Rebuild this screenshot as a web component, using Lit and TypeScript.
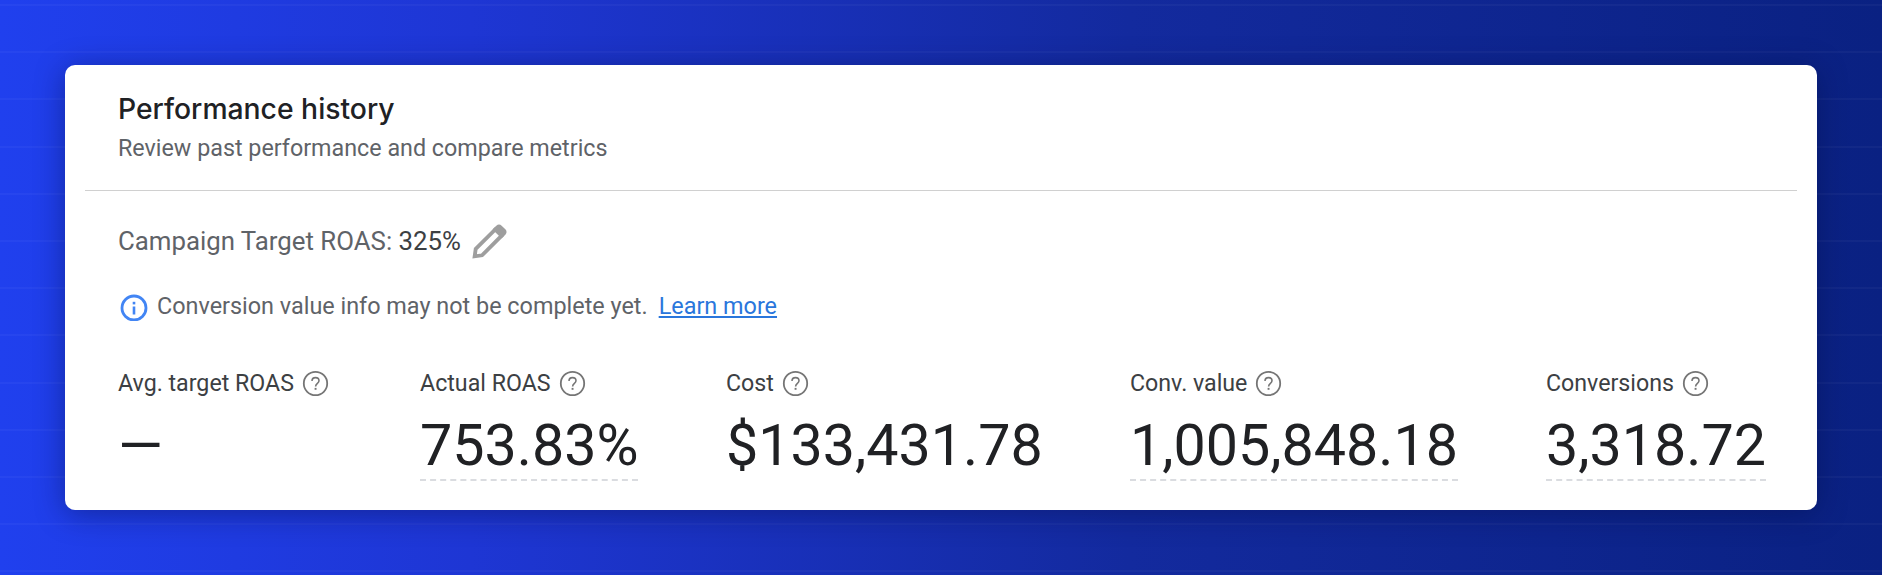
import { LitElement, html, css } from "lit";
import { customElement } from "lit/decorators.js";

const metrics = [
  { label: "Avg. target ROAS", value: "—", dashed: false, width: 302 },
  { label: "Actual ROAS", value: "753.83%", dashed: true, width: 306 },
  { label: "Cost", value: "$133,431.78", dashed: false, width: 404 },
  { label: "Conv. value", value: "1,005,848.18", dashed: true, width: 416 },
  { label: "Conversions", value: "3,318.72", dashed: true, width: 230 },
];

const helpIcon = html`<svg class="help" viewBox="0 0 24 24">
  <circle cx="12" cy="12" r="10.4" fill="none" stroke="#757575" stroke-width="1.6"></circle>
  <path d="M8.9 9.8c0-1.8 1.3-3 3.1-3s3.1 1.2 3.1 2.8c0 2.2-3 2.3-3 5" fill="none" stroke="#757575" stroke-width="1.4"></path>
  <rect x="11.2" y="15.9" width="1.7" height="1.7" fill="#757575"></rect>
</svg>`;

@customElement("app-root")
export class AppRoot extends LitElement {
  static styles = css`
    :host {
      display: block;
      box-sizing: border-box;
      height: 575px;
      padding: 65px;
      font-family: Roboto, "Liberation Sans", sans-serif;
      background:
        repeating-linear-gradient(180deg, rgba(255, 255, 255, 0.03) 0 2px, transparent 2px 47.2px) 0 4px,
        linear-gradient(90deg, #2040ee 0%, #1e36d4 25%, #132a9e 60%, #0a2182 100%);
    }
    .card {
      box-sizing: border-box;
      height: 445px;
      background: #fff;
      border-radius: 10px;
      box-shadow: 0 4px 30px rgba(5, 15, 70, 0.45);
      padding: 0 20px;
    }
    .head {
      padding: 26px 33px 28px;
      border-bottom: 1px solid #d0d0d0;
    }
    .title {
      font-family: Inter, Roboto, sans-serif;
      font-size: 28.3px;
      line-height: 36px;
      font-weight: 500;
      color: #202124;
    }
    .sub {
      margin-top: 7px;
      font-size: 23.3px;
      line-height: 28px;
      color: #5f6368;
    }
    .body {
      padding: 0 33px;
    }
    .target {
      display: flex;
      align-items: center;
      gap: 11px;
      margin-top: 32px;
      height: 36px;
      font-size: 25.8px;
      color: #5f6368;
    }
    .target b {
      font-weight: 400;
      color: #3c4043;
    }
    .notice {
      display: flex;
      align-items: center;
      margin-top: 32px;
      height: 30px;
      font-size: 23.4px;
      color: #5f6368;
    }
    .notice svg {
      width: 30px;
      height: 30px;
      margin-right: 9px;
    }
    .notice a {
      margin-left: 11px;
      color: #2a76dc;
      text-decoration: underline;
    }
    .metrics {
      display: flex;
      margin-top: 48px;
    }
    .metric {
      flex: none;
    }
    .label {
      display: flex;
      align-items: center;
      gap: 8px;
      height: 28px;
      font-size: 23.2px;
      color: #3c4043;
    }
    .help {
      width: 27px;
      height: 27px;
    }
    .value {
      display: inline-block;
      margin-top: 16px;
      height: 66px;
      font-size: 57.4px;
      line-height: 66px;
      color: #202124;
    }
    .dashed {
      border-bottom: 2px dashed #dadce0;
    }
  `;

  render() {
    return html`
      <div class="card">
        <div class="head">
          <div class="title">Performance history</div>
          <div class="sub">Review past performance and compare metrics</div>
        </div>
        <div class="body">
          <div class="target">
            <span>Campaign Target ROAS: <b>325%</b></span>
            <svg width="36" height="36" viewBox="0 0 34 34">
              <path d="M2.500 31.500l1-7L22 6l6 6L9.500 30.500z" fill="none" stroke="#9e9e9e" stroke-width="3.600" stroke-linejoin="miter"></path>
              <path d="M23 2.500c1.500-1.500 3.500-1.500 5 0l3.500 3.500c1.500 1.500 1.500 3.500 0 5L28 14.500 19.500 6z" fill="#9e9e9e"></path>
            </svg>
          </div>
          <div class="notice">
            <svg viewBox="0 0 30 30">
              <circle cx="16" cy="17" r="12" fill="none" stroke="#4285f4" stroke-width="2.800"></circle>
              <rect x="14.700" y="15.500" width="2.600" height="8" fill="#4285f4"></rect>
              <rect x="14.700" y="10.800" width="2.600" height="2.600" fill="#4285f4"></rect>
            </svg>
            <span>Conversion value info may not be complete yet.</span>
            <a href="#">Learn more</a>
          </div>
          <div class="metrics">
            ${metrics.map(
              (m) => html`<div class="metric" style="width:${m.width}px">
                <div class="label">${m.label} ${helpIcon}</div>
                <div class="value ${m.dashed ? "dashed" : ""}">${m.value}</div>
              </div>`
            )}
          </div>
        </div>
      </div>
    `;
  }
}
